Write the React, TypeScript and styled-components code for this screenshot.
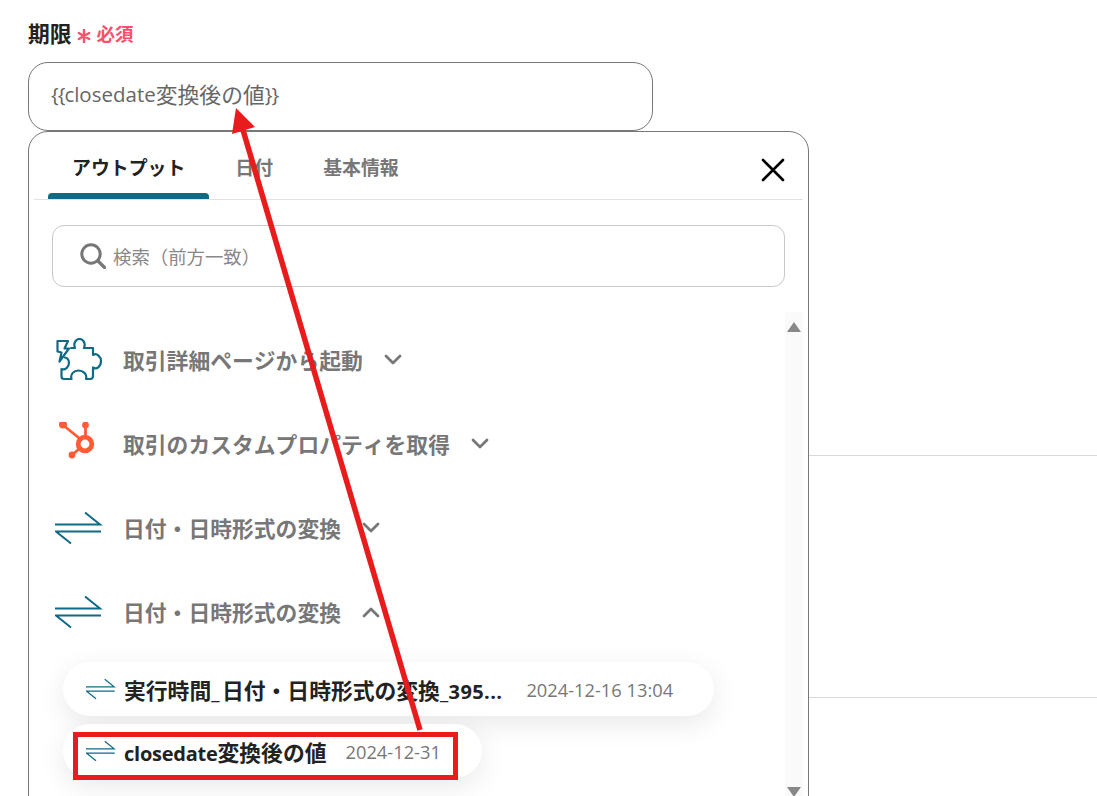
import styled, { createGlobalStyle } from 'styled-components'

const GlobalStyle = createGlobalStyle`
    html, body {
        margin: 0;
        padding: 0;
        background: #fff;
        overflow: hidden;
    }
    * {
        box-sizing: border-box;
    }
`

const sections = [
    { icon: 'puzzle', label: '取引詳細ページから起動', open: false },
    { icon: 'hubspot', label: '取引のカスタムプロパティを取得', open: false },
    { icon: 'transfer', label: '日付・日時形式の変換', open: false },
    { icon: 'transfer', label: '日付・日時形式の変換', open: true },
]

const PuzzleIcon = () => (
    <svg width="48" height="44" viewBox="55 337 48 44" fill="none" stroke="#0f6a85" strokeWidth="2.200" strokeLinejoin="round" strokeLinecap="round">
        <path d="M71 347H75C73 342 76 338 79.5 338C83 338 86 342 84 347H93V354C97 351.500 101 356 101 360C101 365 97 369 93 366.500V375C93 377 92 378 90 378H86C87.500 373 83 369.500 78.500 369.500C74 369.500 70 373 71.500 378H64C62.500 378 61.500 377 61.500 375.500V368C65 369.500 69 366 69 362C69 359 67 357 65 356.500" />
        <path d="M57.500 340H68L64.500 347.500H69L59.500 360.500L61.500 351.500L57.500 350.500Z" />
    </svg>
)

const HubspotIcon = () => (
    <svg width="48" height="44" viewBox="55 424 48 44" fill="none" stroke="#ff5c35" strokeLinecap="round">
        <circle cx="85" cy="446" r="6.800" strokeWidth="4.800" />
        <path d="M63 427L79 440M85.500 427V438M72 457L79 451" strokeWidth="2.800" />
        <circle cx="63" cy="426.500" r="4" fill="#ff5c35" stroke="none" />
        <circle cx="85.500" cy="427" r="3.400" fill="#ff5c35" stroke="none" />
        <circle cx="72" cy="457" r="3.400" fill="#ff5c35" stroke="none" />
    </svg>
)

const TransferIcon = ({ small }: { small?: boolean }) => (
    <svg width={small ? 30 : 48} height={small ? 22 : 34} viewBox="55 509 48 34" fill="none" stroke="#0f6a85" strokeWidth="2">
        <path d="M55 522.500H100L85 510.500" />
        <path d="M101 529.500H56L71 541.500" />
    </svg>
)

const Chevron = ({ open }: { open: boolean }) => (
    <svg width="18" height="12" viewBox="0 0 18 12" fill="none" stroke="#777" strokeWidth="2.800" strokeLinecap="round" strokeLinejoin="round">
        <path d={open ? 'M2 10L9 3L16 10' : 'M2 2L9 9L16 2'} />
    </svg>
)

const App = () => {
    return (
        <Page>
            <GlobalStyle />
            <Divider top={455} />
            <Divider top={697} />

            <FieldLabel>
                期限
                <Required>
                    <AsteriskMark width="14" height="14" viewBox="0 0 14 14" stroke="#f9506b" strokeWidth="2.400" strokeLinecap="round">
                        <path d="M7 1V13M1.800 4L12.200 10M12.200 4L1.800 10" />
                    </AsteriskMark>
                    必須
                </Required>
            </FieldLabel>
            <ValueInput>
                <Braces>{'{{'}</Braces>
                <InputLatin>closedate</InputLatin>変換後の値<Braces>{'}}'}</Braces>
            </ValueInput>

            <Panel>
                <TabBar>
                    <Tab active>アウトプット</Tab>
                    <Tab>日付</Tab>
                    <Tab>基本情報</Tab>
                    <CloseButton>
                        <svg width="24" height="24" viewBox="0 0 24 24" stroke="#000" strokeWidth="2.600" strokeLinecap="round">
                            <path d="M2 2L22 22M22 2L2 22" />
                        </svg>
                    </CloseButton>
                </TabBar>

                <SearchBox>
                    <svg width="26" height="26" viewBox="0 0 26 26" fill="none" stroke="#777" strokeWidth="3" strokeLinecap="round">
                        <circle cx="11" cy="11" r="9.200" />
                        <path d="M18 18L24.500 24.500" strokeWidth="3.200" />
                    </svg>
                    <SearchText>検索（前方一致）</SearchText>
                </SearchBox>

                <ListArea>
                    <List>
                        {sections.map((section, i) => (
                            <SectionRow key={i}>
                                <IconSlot>
                                    {section.icon === 'puzzle' && <PuzzleIcon />}
                                    {section.icon === 'hubspot' && <HubspotIcon />}
                                    {section.icon === 'transfer' && <TransferIcon />}
                                </IconSlot>
                                <SectionLabel>{section.label}</SectionLabel>
                                <Chevron open={section.open} />
                            </SectionRow>
                        ))}
                        <Items>
                            <ItemPill>
                                <TransferIcon small />
                                <ItemName>
                                    実行時間<ItemLatin spacing={2.5}>_</ItemLatin>日付・日時形式の変換<ItemLatin spacing={0.4}>_395...</ItemLatin>
                                </ItemName>
                                <ItemValue gap={24}>2024-12-16 13:04</ItemValue>
                            </ItemPill>
                            <ItemPill>
                                <TransferIcon small />
                                <ItemName>
                                    <ItemLatin spacing={-0.25}>closedate</ItemLatin>変換後の値
                                </ItemName>
                                <ItemValue gap={19}>2024-12-31</ItemValue>
                            </ItemPill>
                        </Items>
                    </List>
                    <ScrollTrack>
                        <ArrowUp />
                        <ArrowDown />
                    </ScrollTrack>
                </ListArea>
            </Panel>

            <HighlightBox />
            <ArrowOverlay width="1097" height="796" viewBox="0 0 1097 796">
                <path d="M420 730L243 130" stroke="#e81c1c" strokeWidth="5.500" fill="none" />
                <path d="M236 108L232 134L255 127Z" fill="#e81c1c" />
            </ArrowOverlay>
        </Page>
    )
}

const Page = styled.div`
    position: relative;
    width: 1097px;
    height: 796px;
    overflow: hidden;
    padding: 21px 0 0 28px;
    font-family: "Open Sans", "Noto Sans CJK JP", sans-serif;
    font-kerning: none;
    background: #fff;
`

const Divider = styled.div<{ top: number }>`
    position: absolute;
    left: 800px;
    right: 0;
    top: ${(props) => props.top}px;
    height: 1px;
    background: #d9d9d9;
`

const FieldLabel = styled.div`
    display: flex;
    align-items: center;
    height: 26px;
    font-size: 21.800px;
    font-weight: 700;
    color: #222;
    line-height: 26px;
`

const Required = styled.span`
    display: flex;
    align-items: center;
    margin-left: 5px;
    font-size: 18.500px;
    color: #f9506b;
`

const AsteriskMark = styled.svg`
    margin: 3px 6px 0 0;
`

const ValueInput = styled.div`
    width: 625px;
    height: 69px;
    margin-top: 15px;
    padding: 0 22px 6px;
    display: flex;
    align-items: center;
    border: 1px solid #777;
    border-radius: 20px;
    font-size: 21.800px;
    color: #666;
    background: #fff;
`

const InputLatin = styled.span`
    font-size: 20.500px;
`

const Braces = styled.span`
    font-size: 20.500px;
    letter-spacing: -1px;
`

const Panel = styled.div`
    position: relative;
    width: 781px;
    height: 700px;
    margin-top: 0;
    border: 1px solid #777;
    border-radius: 20px 20px 0 0;
    background: #fff;
    padding: 0 5px;
`

const TabBar = styled.div`
    display: flex;
    align-items: stretch;
    height: 68px;
    padding-left: 14px;
    gap: 2px;
    border-bottom: 1px solid #e2e2e2;
`

const Tab = styled.div<{ active?: boolean }>`
    position: relative;
    padding: 2px 24px 0;
    display: flex;
    align-items: center;
    font-size: 18.900px;
    font-weight: 700;
    color: ${(props) => (props.active ? '#222' : '#777')};

    ${(props) => props.active && `
        &::after {
            content: '';
            position: absolute;
            left: 0;
            right: 0;
            bottom: 0;
            height: 6px;
            border-radius: 4px 4px 0 0;
            background: #0f6a85;
        }
    `}
`

const CloseButton = styled.div`
    margin-left: auto;
    margin-right: 18px;
    display: flex;
    align-items: center;
    padding-top: 8px;
`

const SearchBox = styled.div`
    display: flex;
    align-items: center;
    width: 733px;
    height: 62px;
    margin: 25px 0 0 18px;
    padding-left: 27px;
    border: 1px solid #c8c8c8;
    border-radius: 12px;
`

const SearchText = styled.span`
    margin-left: 7px;
    font-size: 18.400px;
    color: #888;
`

const ListArea = styled.div`
    display: flex;
    margin-top: 25px;
`

const List = styled.div`
    width: 752px;
    padding: 6px 0 0 21px;
`

const SectionRow = styled.div`
    display: flex;
    align-items: center;
    height: 84px;
`

const IconSlot = styled.div`
    width: 68px;
    display: flex;
    align-items: center;
`

const SectionLabel = styled.span`
    font-size: 21.800px;
    font-weight: 700;
    color: #777;
    margin-right: 21px;
    margin-bottom: 2px;
`

const Items = styled.div`
    display: flex;
    flex-direction: column;
    align-items: flex-start;
    gap: 8px;
    margin: 8px 0 0 8px;
`

const ItemPill = styled.div`
    display: flex;
    align-items: center;
    height: 54px;
    padding: 0 41px 0 23px;
    border-radius: 27px;
    background: #fff;
    box-shadow: 0 8px 28px rgba(0, 0, 0, 0.09);
`

const ItemName = styled.span`
    margin-left: 8px;
    font-size: 21.800px;
    font-weight: 700;
    color: #222;
    white-space: nowrap;
`

const ItemLatin = styled.span<{ spacing: number }>`
    font-size: 20px;
    letter-spacing: ${(props) => props.spacing}px;
`

const ItemValue = styled.span<{ gap: number }>`
    margin-left: ${(props) => props.gap}px;
    font-size: 18.300px;
    color: #777;
    white-space: nowrap;
`

const ScrollTrack = styled.div`
    position: relative;
    width: 18px;
    height: 490px;
    background: #fafafa;
`

const ArrowUp = styled.div`
    position: absolute;
    top: 10px;
    left: 2px;
    width: 0;
    height: 0;
    border-left: 7px solid transparent;
    border-right: 7px solid transparent;
    border-bottom: 10px solid #888;
`

const ArrowDown = styled.div`
    position: absolute;
    top: 475px;
    left: 2px;
    width: 0;
    height: 0;
    border-left: 7px solid transparent;
    border-right: 7px solid transparent;
    border-top: 10px solid #888;
`

const HighlightBox = styled.div`
    position: absolute;
    left: 73px;
    top: 732px;
    width: 385px;
    height: 48px;
    border: 5px solid #e81c1c;
`

const ArrowOverlay = styled.svg`
    position: absolute;
    left: 0;
    top: 0;
`

export default App
